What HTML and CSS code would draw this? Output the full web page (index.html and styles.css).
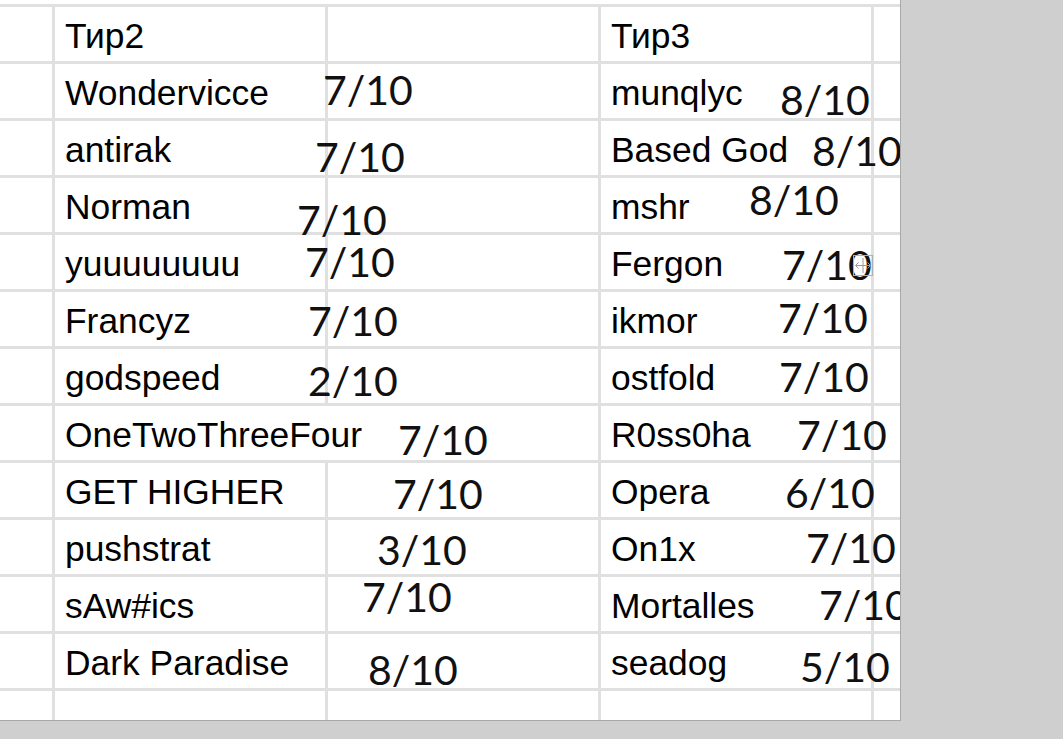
FILE: index.html
```html
<!DOCTYPE html>
<html lang="ru">
<head>
<meta charset="utf-8">
<title>Tier list</title>
<link rel="stylesheet" href="styles.css">
</head>
<body>
<div class="sheet">
  <div class="top-gap"></div>
  <div class="row"><div class="cell a"></div><div class="cell">Тир2</div><div class="cell"></div><div class="cell">Тир3</div><div class="cell e"></div></div>
  <div class="row"><div class="cell a"></div><div class="cell">Wondervicce</div><div class="cell"></div><div class="cell">munqlyc</div><div class="cell e"></div></div>
  <div class="row"><div class="cell a"></div><div class="cell">antirak</div><div class="cell"></div><div class="cell">Based God</div><div class="cell e"></div></div>
  <div class="row"><div class="cell a"></div><div class="cell">Norman</div><div class="cell"></div><div class="cell">mshr</div><div class="cell e"></div></div>
  <div class="row"><div class="cell a"></div><div class="cell">yuuuuuuuu</div><div class="cell"></div><div class="cell">Fergon</div><div class="cell e"></div></div>
  <div class="row"><div class="cell a"></div><div class="cell">Francyz</div><div class="cell"></div><div class="cell">ikmor</div><div class="cell e"></div></div>
  <div class="row"><div class="cell a"></div><div class="cell">godspeed</div><div class="cell"></div><div class="cell">ostfold</div><div class="cell e"></div></div>
  <div class="row"><div class="cell a"></div><div class="cell">OneTwoThreeFour</div><div class="cell no-left"></div><div class="cell">R0ss0ha</div><div class="cell e"></div></div>
  <div class="row"><div class="cell a"></div><div class="cell">GET HIGHER</div><div class="cell"></div><div class="cell">Opera</div><div class="cell e"></div></div>
  <div class="row"><div class="cell a"></div><div class="cell">pushstrat</div><div class="cell"></div><div class="cell">On1x</div><div class="cell e"></div></div>
  <div class="row"><div class="cell a"></div><div class="cell">sAw#ics</div><div class="cell"></div><div class="cell">Mortalles</div><div class="cell e"></div></div>
  <div class="row"><div class="cell a"></div><div class="cell">Dark Paradise</div><div class="cell"></div><div class="cell">seadog</div><div class="cell e"></div></div>
  <div class="row"><div class="cell a"></div><div class="cell"></div><div class="cell"></div><div class="cell"></div><div class="cell e"></div></div>

  <div class="overlay">
    <span class="score b1">7/10</span>
    <span class="score b2">7/10</span>
    <span class="score b3">7/10</span>
    <span class="score b4">7/10</span>
    <span class="score b5">7/10</span>
    <span class="score b6">2/10</span>
    <span class="score b7">7/10</span>
    <span class="score b8">7/10</span>
    <span class="score b9">3/10</span>
    <span class="score b10">7/10</span>
    <span class="score b11">8/10</span>
    <span class="score d1">8/10</span>
    <span class="score d2">8/10</span>
    <span class="score d3">8/10</span>
    <span class="score d4">7/10</span>
    <span class="score d5">7/10</span>
    <span class="score d6">7/10</span>
    <span class="score d7">7/10</span>
    <span class="score d8">6/10</span>
    <span class="score d9">7/10</span>
    <span class="score d10">7/10</span>
    <span class="score d11">5/10</span>
    <svg class="resize-icon" width="20" height="21" viewBox="0 0 20 21">
      <rect x="0.5" y="0.5" width="19" height="20" fill="none" stroke="#b0b0b0" stroke-width="1"/>
      <line x1="10" y1="3" x2="10" y2="18" stroke="#9a9a9a" stroke-width="1"/>
      <path d="M2.5 10.5 H17.5 M2.5 10.5 L5.5 7.5 M2.5 10.5 L5.5 13.5 M17.5 10.5 L14.5 7.5 M17.5 10.5 L14.5 13.5" fill="none" stroke="#9a9a9a" stroke-width="1"/>
    </svg>
  </div>
</div>
</body>
</html>
```

FILE: styles.css
```css
html, body {
  margin: 0;
  padding: 0;
}

body {
  background: #cfcfcf;
  width: 1063px;
  height: 739px;
  overflow: hidden;
}

.sheet {
  position: relative;
  width: 900px;
  height: 720px;
  background: #ffffff;
  border-right: 1px solid #a8a8a8;
  border-bottom: 1px solid #a8a8a8;
  overflow: hidden;
}

.top-gap {
  height: 4px;
}

.row {
  display: flex;
  height: 57px;
  box-sizing: border-box;
  border-top: 3px solid #e0e0e0;
}

.cell {
  flex: none;
  width: 273px;
  box-sizing: border-box;
  border-left: 3px solid #e0e0e0;
  padding: 9px 0 0 10px;
  font-family: "Liberation Sans", Arial, sans-serif;
  font-size: 35.4px;
  line-height: 40px;
  color: #000000;
  white-space: nowrap;
}

.cell.a {
  width: 52px;
  border-left: none;
  padding: 0;
}

.cell.e {
  width: 40px;
}

.cell.no-left {
  border-left-color: transparent;
}

.overlay {
  position: absolute;
  inset: 0;
  pointer-events: none;
}

.score {
  position: absolute;
  font-family: Lato, "Open Sans", sans-serif;
  font-size: 41px;
  line-height: 41px;
  color: #111111;
  white-space: nowrap;
}

/* column B scores: top = baseline - 36 */
.b1  { left: 323px; top: 69px; }
.b2  { left: 315px; top: 136px; }
.b3  { left: 297px; top: 199px; }
.b4  { left: 305px; top: 241px; }
.b5  { left: 308px; top: 300px; }
.b6  { left: 308px; top: 360px; }
.b7  { left: 398px; top: 419px; }
.b8  { left: 393px; top: 473px; }
.b9  { left: 377px; top: 529px; }
.b10 { left: 362px; top: 576px; }
.b11 { left: 368px; top: 649px; }

/* column D scores */
.d1  { left: 780px; top: 79px; }
.d2  { left: 812px; top: 130px; }
.d3  { left: 749px; top: 179px; }
.d4  { left: 782px; top: 244px; }
.d5  { left: 778px; top: 297px; }
.d6  { left: 779px; top: 356px; }
.d7  { left: 797px; top: 414px; }
.d8  { left: 785px; top: 472px; }
.d9  { left: 806px; top: 527px; }
.d10 { left: 819px; top: 584px; }
.d11 { left: 800px; top: 646px; }

.resize-icon {
  position: absolute;
  left: 853px;
  top: 255px;
}
```
